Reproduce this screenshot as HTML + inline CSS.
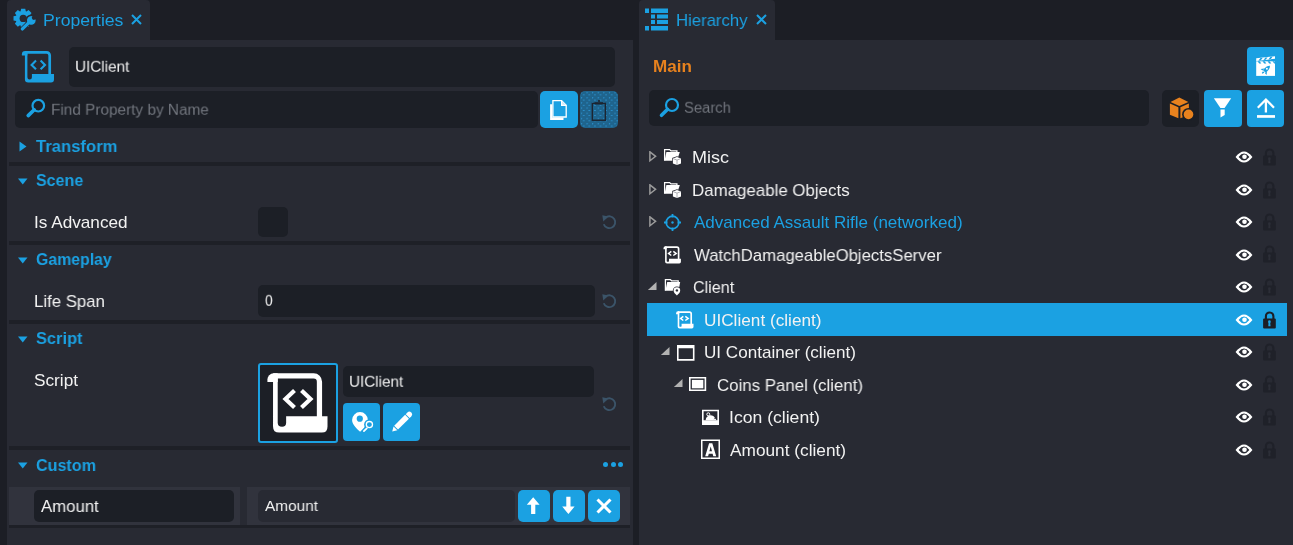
<!DOCTYPE html>
<html><head><meta charset="utf-8"><style>
html,body{margin:0;padding:0;}
body{width:1293px;height:545px;background:#1c1e25;position:relative;overflow:hidden;font-family:"Liberation Sans",sans-serif;}
body>div,body>svg{position:absolute;}
.t{white-space:nowrap;will-change:transform;}
</style></head><body>
<div style="left:7px;top:0px;width:143px;height:41px;background:#282a33;border-radius:4px 4px 0 0;"></div>
<div style="left:7px;top:40px;width:626px;height:505px;background:#282a33;"></div>
<div style="left:639px;top:0px;width:136px;height:41px;background:#282a33;border-radius:4px 4px 0 0;"></div>
<div style="left:639px;top:40px;width:654px;height:505px;background:#282a33;"></div>
<svg style="left:10px;top:5px" width="30" height="30" viewBox="0 0 30 30">
<path d="M10.60 6.26 L11.14 3.72 L15.26 3.72 L15.80 6.26 L16.41 6.51 L18.59 5.10 L21.50 8.01 L20.09 10.19 L20.34 10.80 L22.88 11.34 L22.88 15.46 L20.34 16.00 L20.09 16.61 L21.50 18.79 L18.59 21.70 L16.41 20.29 L15.80 20.54 L15.26 23.08 L11.14 23.08 L10.60 20.54 L9.99 20.29 L7.81 21.70 L4.90 18.79 L6.31 16.61 L6.06 16.00 L3.52 15.46 L3.52 11.34 L6.06 10.80 L6.31 10.19 L4.90 8.01 L7.81 5.10 L9.99 6.51Z" fill="#1ba1e2"/>
<circle cx="13.2" cy="13.4" r="3.6" fill="#282a33"/>
<g stroke="#282a33" stroke-width="2.2" fill="none">
<path d="M12.4 23.9L19.9 16.6" stroke-width="4.8" stroke-linecap="round"/>
<circle cx="21.3" cy="15.5" r="5.0"/>
</g>
<path d="M12.4 23.9L19.9 16.6" stroke="#1ba1e2" stroke-width="3.4" stroke-linecap="round"/>
<circle cx="21.3" cy="15.5" r="4.3" fill="#1ba1e2"/>
<circle cx="23.9" cy="12.8" r="2.1" fill="#282a33"/>
<path d="M23.9 12.8L27.3 9.3" stroke="#282a33" stroke-width="3.4"/>
</svg>
<div class="t" style="left:42.96px;top:11.000px;font-size:17px;line-height:20px;color:#1ba1e2;font-weight:400;transform:scale(1.0382,1.0000);transform-origin:0 0">Properties</div>
<svg style="left:131px;top:14px" width="11" height="11" viewBox="0 0 11 11"><path d="M1 1L10 10M10 1L1 10" stroke="#1ba1e2" stroke-width="2"/></svg>
<svg style="left:15px;top:45px" width="45" height="45" viewBox="0 0 45 45">
<path d="M10 7.3H31.6A3.1 3.1 0 0 1 34.7 10.4V29.5" fill="none" stroke="#1ba1e2" stroke-width="2.7"/>
<path d="M12.4 5.95H10.2A3.3 3.3 0 0 0 6.9 9.25V10.6H12.4Z" fill="#1ba1e2"/>
<path d="M9.9 8V34.3Q9.9 37.6 13.2 37.6H36Q39 37.6 39 34.3V28.9H16.9V32.3Q16.9 34.5 14.7 34.5Q12.4 34.5 12.4 32.3V8Z" fill="#1ba1e2"/>
<path d="M21 15.6L16.6 19.9L21 24.2M25.6 15.6L30 19.9L25.6 24.2" fill="none" stroke="#1ba1e2" stroke-width="2.1"/>
</svg>
<div style="left:69px;top:47px;width:546px;height:40px;background:#1c1f26;border-radius:5px;"></div>
<div class="t" style="left:75.15px;top:58.250px;font-size:16px;line-height:19px;color:#f2f2f2;font-weight:400;transform:scale(0.9536,0.9167);transform-origin:0 0">UIClient</div>
<div style="left:15px;top:91px;width:523px;height:37px;background:#1c1f26;border-radius:5px;"></div>
<svg style="left:25px;top:97px" width="22" height="22" viewBox="0 0 22 22"><circle cx="13.3" cy="8.7" r="5.8" fill="none" stroke="#1ba1e2" stroke-width="2.2"/><path d="M9.2 12.8L3.2 18.6" stroke="#1ba1e2" stroke-width="3.6" stroke-linecap="round"/></svg>
<div class="t" style="left:50.54px;top:101.250px;font-size:16px;line-height:19px;color:#72767e;font-weight:400;transform:scale(0.9595,0.9167);transform-origin:0 0">Find Property by Name</div>
<div style="left:540px;top:91px;width:38px;height:37px;background:#1ba1e2;border-radius:5px;"></div>
<svg style="left:540px;top:91px" width="38" height="37" viewBox="0 0 38 37">
<path d="M10.1 13.2H12.3V26.6H23.5V28.9H10.1Z" fill="#fff"/>
<path d="M12.9 9.7H21.6L26.2 14.3V26H12.9Z" fill="#1ba1e2" stroke="#fff" stroke-width="1.3"/>
<path d="M21.6 9.7V14.3H26.2" fill="#cfe9f8" stroke="#fff" stroke-width="1.2"/>
</svg>
<div style="left:580px;top:91px;width:38px;height:37px;border-radius:5px;background-color:#1f648d;background-image:radial-gradient(circle at 1.5px 1.5px,#2a8ecb 0.5px,transparent 0.95px),radial-gradient(circle at 3.7px 3.9px,#2a8ecb 0.5px,transparent 0.95px);background-size:5.6px 5.2px,5.6px 5.2px"></div>
<svg style="left:580px;top:91px" width="38" height="37" viewBox="0 0 38 37">
<rect x="12.35" y="12.35" width="13" height="16.9" fill="none" stroke="#1c2430" stroke-width="1.4"/>
<path d="M14.5 11.2H23.2L22.5 13.5H15.2Z" fill="#1c2430"/>
<circle cx="19" cy="10" r="1.1" fill="#1c2430"/>
</svg>
<svg style="left:19px;top:141px" width="8" height="11" viewBox="0 0 8 11"><path d="M0.5 0.5L7.5 5.5L0.5 10.5z" fill="#1ba1e2"/></svg>
<div class="t" style="left:35.80px;top:137.000px;font-size:17px;line-height:20px;color:#1ba1e2;font-weight:700;transform:scale(0.9793,1.0000);transform-origin:0 0">Transform</div>
<div style="left:9px;top:162px;width:621px;height:4px;background:#1e2027;"></div>
<svg style="left:18px;top:178px" width="10" height="7" viewBox="0 0 10 7"><path d="M0 0.5H9.5L4.75 6.5z" fill="#1ba1e2"/></svg>
<div class="t" style="left:36.20px;top:171.000px;font-size:17px;line-height:20px;color:#1ba1e2;font-weight:700;transform:scale(0.9420,1.0000);transform-origin:0 0">Scene</div>
<div class="t" style="left:33.69px;top:213.000px;font-size:17px;line-height:20px;color:#f2f2f2;font-weight:400;transform:scale(1.0110,1.0000);transform-origin:0 0">Is Advanced</div>
<div style="left:258px;top:207px;width:30px;height:30px;background:#1c1f26;border-radius:5px;"></div>
<svg style="left:601px;top:214px" width="16" height="16" viewBox="0 0 16 16"><path d="M4.5 3.7A5.9 5.9 0 1 1 2.76 10.2" fill="none" stroke="#3b5469" stroke-width="1.9"/><path d="M1.3 1.2L7.4 2.6L2.3 7.4Z" fill="#3b5469"/></svg>
<div style="left:9px;top:241px;width:621px;height:4px;background:#1e2027;"></div>
<svg style="left:18px;top:256.5px" width="10" height="7" viewBox="0 0 10 7"><path d="M0 0.5H9.5L4.75 6.5z" fill="#1ba1e2"/></svg>
<div class="t" style="left:36.40px;top:250.000px;font-size:17px;line-height:20px;color:#1ba1e2;font-weight:700;transform:scale(0.9321,1.0000);transform-origin:0 0">Gameplay</div>
<div class="t" style="left:34.31px;top:292.000px;font-size:17px;line-height:20px;color:#f2f2f2;font-weight:400;transform:scale(0.9857,1.0000);transform-origin:0 0">Life Span</div>
<div style="left:258px;top:285px;width:337px;height:32px;background:#1c1f26;border-radius:5px;"></div>
<div class="t" style="left:265.30px;top:292.250px;font-size:16px;line-height:19px;color:#f2f2f2;font-weight:400;transform:scale(0.8556,0.9167);transform-origin:0 0">0</div>
<svg style="left:601px;top:293px" width="16" height="16" viewBox="0 0 16 16"><path d="M4.5 3.7A5.9 5.9 0 1 1 2.76 10.2" fill="none" stroke="#3b5469" stroke-width="1.9"/><path d="M1.3 1.2L7.4 2.6L2.3 7.4Z" fill="#3b5469"/></svg>
<div style="left:9px;top:320px;width:621px;height:4px;background:#1e2027;"></div>
<svg style="left:18px;top:335.5px" width="10" height="7" viewBox="0 0 10 7"><path d="M0 0.5H9.5L4.75 6.5z" fill="#1ba1e2"/></svg>
<div class="t" style="left:36.20px;top:329.000px;font-size:17px;line-height:20px;color:#1ba1e2;font-weight:700;transform:scale(0.9646,1.0000);transform-origin:0 0">Script</div>
<div class="t" style="left:34.19px;top:371.000px;font-size:17px;line-height:20px;color:#f2f2f2;font-weight:400;transform:scale(1.0140,1.0000);transform-origin:0 0">Script</div>
<div style="left:258px;top:363px;width:80px;height:80px;background:#1c1f26;border-radius:3px;box-sizing:border-box;border:2px solid #1ba1e2;"></div>
<svg style="left:250px;top:355px" width="90" height="90" viewBox="0 0 90 90">
<g transform="translate(4.5 7.2) scale(1.872)">
<path d="M10 7.3H31.6A3.1 3.1 0 0 1 34.7 10.4V29.5" fill="none" stroke="#fff" stroke-width="2.8"/>
<path d="M12.4 5.95H10.2A3.3 3.3 0 0 0 6.9 9.25V10.6H12.4Z" fill="#fff"/>
<path d="M9.9 8V34.3Q9.9 37.6 13.2 37.6H36Q39 37.6 39 34.3V28.9H16.9V32.3Q16.9 34.5 14.7 34.5Q12.4 34.5 12.4 32.3V8Z" fill="#fff"/>
</g>
<path d="M44.5 35.5L35.5 44L44.5 52.5M51.5 35.5L60.5 44L51.5 52.5" fill="none" stroke="#fff" stroke-width="4.2"/>
</svg>
<div style="left:343px;top:366px;width:251px;height:31px;background:#1c1f26;border-radius:5px;"></div>
<div class="t" style="left:349.35px;top:373.250px;font-size:16px;line-height:19px;color:#f2f2f2;font-weight:400;transform:scale(0.9518,0.9167);transform-origin:0 0">UIClient</div>
<div style="left:343px;top:403px;width:37px;height:38px;background:#1ba1e2;border-radius:4px;"></div>
<svg style="left:343px;top:403px" width="37" height="38" viewBox="0 0 37 38">
<path d="M17 9.1A7.9 7.9 0 0 0 9.1 17C9.1 21.5 13.5 25.5 17.1 28.7C20.5 25.5 24.9 21.5 24.9 17A7.9 7.9 0 0 0 17 9.1Z" fill="#fff"/>
<circle cx="16.8" cy="15.7" r="3.1" fill="#1ba1e2"/>
<circle cx="26.4" cy="21.6" r="5.3" fill="#1ba1e2"/>
<path d="M20.3 28.6L24 24.9" stroke="#1ba1e2" stroke-width="3.6"/>
<circle cx="26.4" cy="21.6" r="3.1" fill="none" stroke="#fff" stroke-width="1.3"/>
<path d="M20.9 28.2L23.8 25.3" stroke="#fff" stroke-width="1.7" stroke-linecap="round"/>
</svg>
<div style="left:383px;top:403px;width:37px;height:38px;background:#1ba1e2;border-radius:4px;"></div>
<svg style="left:383px;top:403px" width="37" height="38" viewBox="0 0 37 38">
<g transform="translate(9.2 28.6) rotate(-45)">
<path d="M0 0L4.6 -2.7V2.7Z" fill="#fff"/>
<rect x="5.5" y="-2.7" width="15.5" height="5.4" fill="#fff"/>
<path d="M21.9 -2.7H24.2A2.7 2.7 0 0 1 24.2 2.7H21.9Z" fill="#fff"/>
</g>
</svg>
<svg style="left:601px;top:396px" width="16" height="16" viewBox="0 0 16 16"><path d="M4.5 3.7A5.9 5.9 0 1 1 2.76 10.2" fill="none" stroke="#3b5469" stroke-width="1.9"/><path d="M1.3 1.2L7.4 2.6L2.3 7.4Z" fill="#3b5469"/></svg>
<div style="left:9px;top:446px;width:621px;height:4px;background:#1e2027;"></div>
<svg style="left:18px;top:461.5px" width="10" height="7" viewBox="0 0 10 7"><path d="M0 0.5H9.5L4.75 6.5z" fill="#1ba1e2"/></svg>
<div class="t" style="left:36.40px;top:456.000px;font-size:17px;line-height:20px;color:#1ba1e2;font-weight:700;transform:scale(0.9476,1.0000);transform-origin:0 0">Custom</div>
<div style="left:603.0px;top:462.2px;width:5px;height:5px;border-radius:50%;background:#1ba1e2"></div>
<div style="left:610.5px;top:462.2px;width:5px;height:5px;border-radius:50%;background:#1ba1e2"></div>
<div style="left:618.0px;top:462.2px;width:5px;height:5px;border-radius:50%;background:#1ba1e2"></div>
<div style="left:9px;top:487px;width:231px;height:38px;background:#31333d;"></div>
<div style="left:247px;top:487px;width:383px;height:38px;background:#31333d;"></div>
<div style="left:34px;top:490px;width:200px;height:32px;background:#1c1f26;border-radius:5px;"></div>
<div class="t" style="left:41.20px;top:497.000px;font-size:17px;line-height:20px;color:#f2f2f2;font-weight:400;transform:scale(0.9864,1.0000);transform-origin:0 0">Amount</div>
<div style="left:258px;top:490px;width:257px;height:32px;background:#282a33;border-radius:5px;"></div>
<div class="t" style="left:265.10px;top:496.000px;font-size:15.5px;line-height:19px;color:#f2f2f2;font-weight:400;transform:scale(0.9926,1.0000);transform-origin:0 0">Amount</div>
<div style="left:518px;top:490px;width:32px;height:32px;background:#1ba1e2;border-radius:5px;"></div>
<svg style="left:518px;top:490px" width="32" height="32" viewBox="0 0 32 32"><path d="M15.2 7.3L8.8 14.8H13.1V24H17.3V14.8H21.6Z" fill="#fff"/></svg>
<div style="left:553px;top:490px;width:32px;height:32px;background:#1ba1e2;border-radius:5px;"></div>
<svg style="left:553px;top:490px" width="32" height="32" viewBox="0 0 32 32"><path d="M15.4 24L9.2 16.6H13.3V6.8H17.5V16.6H21.6Z" fill="#fff"/></svg>
<div style="left:588px;top:490px;width:32px;height:32px;background:#1ba1e2;border-radius:5px;"></div>
<svg style="left:588px;top:490px" width="32" height="32" viewBox="0 0 32 32"><path d="M9.5 9.5l13 13M22.5 9.5l-13 13" stroke="#fff" stroke-width="3"/></svg>
<div style="left:9px;top:525px;width:621px;height:3px;background:#1e2027;"></div>
<svg style="left:644px;top:8px" width="25" height="23" viewBox="0 0 25 23">
<g fill="#1ba1e2">
<rect x="1" y="0.5" width="4" height="4.5"/><rect x="7" y="0.5" width="17" height="4.5"/>
<rect x="7" y="6.5" width="4" height="4"/><rect x="13" y="6.5" width="11" height="4"/>
<rect x="7" y="12" width="4" height="4"/><rect x="13" y="12" width="11" height="4"/>
<rect x="1" y="18" width="4" height="4.5"/><rect x="7" y="18" width="17" height="4.5"/>
</g></svg>
<div class="t" style="left:675.52px;top:11.000px;font-size:17px;line-height:20px;color:#1ba1e2;font-weight:400;transform:scale(0.9833,1.0000);transform-origin:0 0">Hierarchy</div>
<svg style="left:756px;top:14px" width="11" height="11" viewBox="0 0 11 11"><path d="M1 1L10 10M10 1L1 10" stroke="#1ba1e2" stroke-width="2"/></svg>
<div class="t" style="left:652.60px;top:57.000px;font-size:17px;line-height:20px;color:#e8821e;font-weight:700;transform:scale(1.0027,1.0000);transform-origin:0 0">Main</div>
<div style="left:1247px;top:47px;width:37px;height:38px;background:#1ba1e2;border-radius:4px;"></div>
<svg style="left:1250px;top:50px" width="32" height="32" viewBox="0 0 32 32">
<path d="M6.2 8.3L25 6.2V8.8L6.2 10.9Z" fill="#fff"/>
<rect x="6.2" y="11.3" width="18.8" height="14.6" fill="#fff"/>
<g fill="#1ba1e2">
<path d="M8.5 10.6L10.5 7.9H12.6L10.6 10.4Z"/><path d="M13.5 10.1L15.5 7.4H17.6L15.6 9.8Z"/><path d="M18.5 9.5L20.5 6.8H22.6L20.6 9.2Z"/>
<path d="M7.5 11.3H9.6L11.3 13.6H9.2Z"/><path d="M12.5 11.3H14.6L16.3 13.6H14.2Z"/><path d="M17.5 11.3H19.6L21.3 13.6H19.2Z"/><path d="M22.5 11.3H24.6L25 12.2V13.6H24.2Z"/>
</g>
<g transform="translate(16 19.6) rotate(45)" fill="#1ba1e2">
<path d="M0 -5.6C1.8 -4 2.2 -1.5 2 2.5H-2C-2.2 -1.5 -1.8 -4 0 -5.6Z"/>
<path d="M-2 0.5L-4.2 3.4L-1.8 3.2Z"/><path d="M2 0.5L4.2 3.4L1.8 3.2Z"/>
<path d="M-1 3.2H1L0.6 5.4H-0.6Z"/>
</g>
<circle cx="16.9" cy="18.7" r="1" fill="#fff"/>
</svg>
<div style="left:649px;top:90px;width:500px;height:36px;background:#1c1f26;border-radius:5px;"></div>
<svg style="left:657px;top:96px" width="24" height="24" viewBox="0 0 24 24"><circle cx="15" cy="9" r="6" fill="none" stroke="#1ba1e2" stroke-width="2.2"/><path d="M10.6 13.3L4.5 19.3" stroke="#1ba1e2" stroke-width="3.6" stroke-linecap="round"/></svg>
<div class="t" style="left:684.38px;top:99.250px;font-size:16px;line-height:19px;color:#72767e;font-weight:400;transform:scale(0.9245,0.9167);transform-origin:0 0">Search</div>
<div style="left:1162px;top:90px;width:37px;height:37px;background:#1c1f26;border-radius:5px;"></div>
<svg style="left:1162px;top:90px" width="37" height="37" viewBox="0 0 37 37">
<path d="M17.3 7.6L26.3 12L17.3 15.9L8.5 12Z" fill="#e8821e"/>
<path d="M7.9 13.5L16.4 17.2V28.3L7.9 24.8Z" fill="#e8821e"/>
<path d="M18.4 17.2L26.9 13.5V24.8L18.4 28.3Z" fill="#e8821e"/>
<circle cx="26.5" cy="24.4" r="6.4" fill="#1c1f26"/>
<circle cx="26.5" cy="24.4" r="4.8" fill="#e8821e"/>
</svg>
<div style="left:1204px;top:90px;width:38px;height:37px;background:#1ba1e2;border-radius:4px;"></div>
<svg style="left:1204px;top:90px" width="38" height="37" viewBox="0 0 38 37"><path d="M9.85 8.15H27.2L20.6 18H16.4Z" fill="#fff"/><path d="M16.5 19.6H20.7V25.1L16.5 27.5Z" fill="#fff"/></svg>
<div style="left:1247px;top:90px;width:37px;height:37px;background:#1ba1e2;border-radius:4px;"></div>
<svg style="left:1247px;top:90px" width="37" height="37" viewBox="0 0 37 37"><path d="M18.9 8L10 16.9L11.6 18.5L17.75 12.35V22.4H20.05V12.35L26.2 18.5L27.8 16.9Z" fill="#fff"/><rect x="10" y="25.1" width="18" height="2.7" fill="#fff"/></svg>
<div style="left:647px;top:303px;width:640px;height:33px;background:#1ba1e2;"></div>
<svg style="left:648.5px;top:151px" width="9" height="12" viewBox="0 0 9 12"><path d="M0.9 0.8L6.6 5.3L0.9 9.8z" fill="none" stroke="#9a9a9a" stroke-width="1.5"/></svg>
<svg style="left:660px;top:146px" width="24" height="22" viewBox="0 0 24 22"><path d="M4.6 14.8V3.6H9.6L11 4.9H16.9V6.3" fill="none" stroke="#fff" stroke-width="1.25"/>
<path d="M6.4 6.1H19.8L17 14.8H4.6Z" fill="#fff"/>
<path d="M12.9 12.5L17 10.9L21 12.5V17.4L17 19L12.9 17.4Z" fill="#fff" stroke="#282a33" stroke-width="1.4" paint-order="stroke"/>
<path d="M12.9 12.5L17 14.1L21 12.5M17 14.1V19" fill="none" stroke="#9a9ca2" stroke-width="0.8"/></svg>
<div class="t" style="left:692.24px;top:148.000px;font-size:17px;line-height:20px;color:#f2f2f2;font-weight:400;transform:scale(1.0588,1.0000);transform-origin:0 0">Misc</div>
<svg style="left:1234.4px;top:150.4px" width="20" height="14" viewBox="0 0 20 14"><path fill-rule="evenodd" d="M1.55 7Q10 -4 18.45 7Q10 18 1.55 7ZM4.6 7Q10 0.2 15.4 7Q10 13.8 4.6 7Z" fill="#fff"/><circle cx="10.5" cy="6.8" r="2.3" fill="#fff"/></svg>
<svg style="left:1262px;top:148px" width="16" height="19" viewBox="0 0 16 19"><path d="M3.9 8.5V5.25A3.75 3.75 0 0 1 11.4 5.25V8.5" fill="none" stroke="#1f2129" stroke-width="2.1"/><rect x="1.1" y="7.6" width="12.7" height="9.8" rx="1" fill="#1f2129"/><circle cx="7.4" cy="10.7" r="1.35" fill="#2c2e37"/><path d="M6.6 11H8.2L8.5 15.3H6.3Z" fill="#2c2e37"/></svg>
<svg style="left:648.5px;top:183.5px" width="9" height="12" viewBox="0 0 9 12"><path d="M0.9 0.8L6.6 5.3L0.9 9.8z" fill="none" stroke="#9a9a9a" stroke-width="1.5"/></svg>
<svg style="left:660px;top:178.5px" width="24" height="22" viewBox="0 0 24 22"><path d="M4.6 14.8V3.6H9.6L11 4.9H16.9V6.3" fill="none" stroke="#fff" stroke-width="1.25"/>
<path d="M6.4 6.1H19.8L17 14.8H4.6Z" fill="#fff"/>
<path d="M12.9 12.5L17 10.9L21 12.5V17.4L17 19L12.9 17.4Z" fill="#fff" stroke="#282a33" stroke-width="1.4" paint-order="stroke"/>
<path d="M12.9 12.5L17 14.1L21 12.5M17 14.1V19" fill="none" stroke="#9a9ca2" stroke-width="0.8"/></svg>
<div class="t" style="left:692.31px;top:181.000px;font-size:17px;line-height:20px;color:#f2f2f2;font-weight:400;transform:scale(0.9930,1.0000);transform-origin:0 0">Damageable Objects</div>
<svg style="left:1234.4px;top:182.9px" width="20" height="14" viewBox="0 0 20 14"><path fill-rule="evenodd" d="M1.55 7Q10 -4 18.45 7Q10 18 1.55 7ZM4.6 7Q10 0.2 15.4 7Q10 13.8 4.6 7Z" fill="#fff"/><circle cx="10.5" cy="6.8" r="2.3" fill="#fff"/></svg>
<svg style="left:1262px;top:181px" width="16" height="19" viewBox="0 0 16 19"><path d="M3.9 8.5V5.25A3.75 3.75 0 0 1 11.4 5.25V8.5" fill="none" stroke="#1f2129" stroke-width="2.1"/><rect x="1.1" y="7.6" width="12.7" height="9.8" rx="1" fill="#1f2129"/><circle cx="7.4" cy="10.7" r="1.35" fill="#2c2e37"/><path d="M6.6 11H8.2L8.5 15.3H6.3Z" fill="#2c2e37"/></svg>
<svg style="left:648.5px;top:216px" width="9" height="12" viewBox="0 0 9 12"><path d="M0.9 0.8L6.6 5.3L0.9 9.8z" fill="none" stroke="#9a9a9a" stroke-width="1.5"/></svg>
<svg style="left:663px;top:212.5px" width="19" height="19" viewBox="0 0 19 19"><circle cx="9.5" cy="9.5" r="6.3" fill="none" stroke="#1ba1e2" stroke-width="1.7"/><path d="M9.5 1v3.5M9.5 14.5v3.5M1 9.5h3.5M14.5 9.5h3.5" stroke="#1ba1e2" stroke-width="1.8"/><circle cx="9.5" cy="9.5" r="1.2" fill="#1ba1e2"/></svg>
<div class="t" style="left:693.50px;top:213.000px;font-size:17px;line-height:20px;color:#1ba1e2;font-weight:400;transform:scale(1.0007,1.0000);transform-origin:0 0">Advanced Assault Rifle (networked)</div>
<svg style="left:1234.4px;top:215.4px" width="20" height="14" viewBox="0 0 20 14"><path fill-rule="evenodd" d="M1.55 7Q10 -4 18.45 7Q10 18 1.55 7ZM4.6 7Q10 0.2 15.4 7Q10 13.8 4.6 7Z" fill="#fff"/><circle cx="10.5" cy="6.8" r="2.3" fill="#fff"/></svg>
<svg style="left:1262px;top:213px" width="16" height="19" viewBox="0 0 16 19"><path d="M3.9 8.5V5.25A3.75 3.75 0 0 1 11.4 5.25V8.5" fill="none" stroke="#1f2129" stroke-width="2.1"/><rect x="1.1" y="7.6" width="12.7" height="9.8" rx="1" fill="#1f2129"/><circle cx="7.4" cy="10.7" r="1.35" fill="#2c2e37"/><path d="M6.6 11H8.2L8.5 15.3H6.3Z" fill="#2c2e37"/></svg>
<svg style="left:660px;top:243px" width="24" height="24" viewBox="0 0 24 24"><g transform="translate(-0.10 0.25) scale(0.539)">
<path d="M10 7.3H31.6A3.1 3.1 0 0 1 34.7 10.4V29.5" fill="none" stroke="#fff" stroke-width="3.1"/>
<path d="M12.4 5.7H10.2A3.5 3.5 0 0 0 6.7 9.2V11H12.4Z" fill="#fff"/>
<path d="M9.6 8V34.3Q9.6 37.6 13.2 37.6H36Q39 37.6 39 34.3V28.9H16.9V32.3Q16.9 34.5 14.7 34.5Q12.6 34.5 12.6 32.3V8Z" fill="#fff"/>
</g>
<path d="M11.3 8.4L8.6 10.45L11.3 12.5M13.3 8.4L16.2 10.45L13.3 12.5" fill="none" stroke="#fff" stroke-width="1.5"/></svg>
<div class="t" style="left:693.50px;top:246.000px;font-size:17px;line-height:20px;color:#f2f2f2;font-weight:400;transform:scale(0.9837,1.0000);transform-origin:0 0">WatchDamageableObjectsServer</div>
<svg style="left:1234.4px;top:247.9px" width="20" height="14" viewBox="0 0 20 14"><path fill-rule="evenodd" d="M1.55 7Q10 -4 18.45 7Q10 18 1.55 7ZM4.6 7Q10 0.2 15.4 7Q10 13.8 4.6 7Z" fill="#fff"/><circle cx="10.5" cy="6.8" r="2.3" fill="#fff"/></svg>
<svg style="left:1262px;top:245px" width="16" height="19" viewBox="0 0 16 19"><path d="M3.9 8.5V5.25A3.75 3.75 0 0 1 11.4 5.25V8.5" fill="none" stroke="#1f2129" stroke-width="2.1"/><rect x="1.1" y="7.6" width="12.7" height="9.8" rx="1" fill="#1f2129"/><circle cx="7.4" cy="10.7" r="1.35" fill="#2c2e37"/><path d="M6.6 11H8.2L8.5 15.3H6.3Z" fill="#2c2e37"/></svg>
<svg style="left:647.3px;top:280.5px" width="11" height="11" viewBox="0 0 11 11"><path d="M9.5 0.9V9.1H0.9z" fill="#b2b2b2"/></svg>
<svg style="left:660px;top:275px" width="24" height="24" viewBox="0 0 24 24"><path d="M5.4 15.8V4.5H10.3L11.6 5.8H18.2V7" fill="none" stroke="#fff" stroke-width="1.25"/>
<path d="M7.2 7H20.2L18.5 15.8H5.4Z" fill="#fff"/>
<path d="M16.9 12.3A3.3 3.3 0 0 1 20.2 15.6C20.2 17.6 18.5 19.2 16.9 20.5C15.3 19.2 13.6 17.6 13.6 15.6A3.3 3.3 0 0 1 16.9 12.3Z" fill="#fff" stroke="#282a33" stroke-width="1.6" paint-order="stroke"/>
<circle cx="16.9" cy="15.4" r="1.2" fill="#282a33"/></svg>
<div class="t" style="left:692.55px;top:278.000px;font-size:17px;line-height:20px;color:#f2f2f2;font-weight:400;transform:scale(0.9488,1.0000);transform-origin:0 0">Client</div>
<svg style="left:1234.4px;top:280.4px" width="20" height="14" viewBox="0 0 20 14"><path fill-rule="evenodd" d="M1.55 7Q10 -4 18.45 7Q10 18 1.55 7ZM4.6 7Q10 0.2 15.4 7Q10 13.8 4.6 7Z" fill="#fff"/><circle cx="10.5" cy="6.8" r="2.3" fill="#fff"/></svg>
<svg style="left:1262px;top:278px" width="16" height="19" viewBox="0 0 16 19"><path d="M3.9 8.5V5.25A3.75 3.75 0 0 1 11.4 5.25V8.5" fill="none" stroke="#1f2129" stroke-width="2.1"/><rect x="1.1" y="7.6" width="12.7" height="9.8" rx="1" fill="#1f2129"/><circle cx="7.4" cy="10.7" r="1.35" fill="#2c2e37"/><path d="M6.6 11H8.2L8.5 15.3H6.3Z" fill="#2c2e37"/></svg>
<svg style="left:672px;top:308px" width="24" height="24" viewBox="0 0 24 24"><g transform="translate(0.50 0.25) scale(0.539)">
<path d="M10 7.3H31.6A3.1 3.1 0 0 1 34.7 10.4V29.5" fill="none" stroke="#fff" stroke-width="3.1"/>
<path d="M12.4 5.7H10.2A3.5 3.5 0 0 0 6.7 9.2V11H12.4Z" fill="#fff"/>
<path d="M9.6 8V34.3Q9.6 37.6 13.2 37.6H36Q39 37.6 39 34.3V28.9H16.9V32.3Q16.9 34.5 14.7 34.5Q12.6 34.5 12.6 32.3V8Z" fill="#fff"/>
</g>
<path d="M11.3 8.4L8.6 10.45L11.3 12.5M13.3 8.4L16.2 10.45L13.3 12.5" fill="none" stroke="#fff" stroke-width="1.5"/></svg>
<div class="t" style="left:704.09px;top:311.000px;font-size:17px;line-height:20px;color:#f2f2f2;font-weight:400;transform:scale(1.0114,1.0000);transform-origin:0 0">UIClient (client)</div>
<svg style="left:1234.4px;top:312.9px" width="20" height="14" viewBox="0 0 20 14"><path fill-rule="evenodd" d="M1.55 7Q10 -4 18.45 7Q10 18 1.55 7ZM4.6 7Q10 0.2 15.4 7Q10 13.8 4.6 7Z" fill="#fff"/><circle cx="10.5" cy="6.8" r="2.3" fill="#fff"/></svg>
<svg style="left:1262px;top:311px" width="16" height="19" viewBox="0 0 16 19"><path d="M3.9 8.5V5.25A3.75 3.75 0 0 1 11.4 5.25V8.5" fill="none" stroke="#1c1e25" stroke-width="2.1"/><rect x="1.1" y="7.6" width="12.7" height="9.8" rx="1" fill="#1c1e25"/><circle cx="7.4" cy="10.7" r="1.35" fill="#1ba1e2"/><path d="M6.6 11H8.2L8.5 15.3H6.3Z" fill="#1ba1e2"/></svg>
<svg style="left:659.7px;top:345.5px" width="11" height="11" viewBox="0 0 11 11"><path d="M9.5 0.9V9.1H0.9z" fill="#b2b2b2"/></svg>
<svg style="left:676.7px;top:344.5px" width="18" height="16" viewBox="0 0 18 16"><path fill-rule="evenodd" d="M0 0H17.5V15.7H0ZM1.6 3.2V14.1H15.9V3.2Z" fill="#fff"/></svg>
<div class="t" style="left:704.00px;top:343.000px;font-size:17px;line-height:20px;color:#f2f2f2;font-weight:400;transform:scale(1.0047,1.0000);transform-origin:0 0">UI Container (client)</div>
<svg style="left:1234.4px;top:345.4px" width="20" height="14" viewBox="0 0 20 14"><path fill-rule="evenodd" d="M1.55 7Q10 -4 18.45 7Q10 18 1.55 7ZM4.6 7Q10 0.2 15.4 7Q10 13.8 4.6 7Z" fill="#fff"/><circle cx="10.5" cy="6.8" r="2.3" fill="#fff"/></svg>
<svg style="left:1262px;top:343px" width="16" height="19" viewBox="0 0 16 19"><path d="M3.9 8.5V5.25A3.75 3.75 0 0 1 11.4 5.25V8.5" fill="none" stroke="#1f2129" stroke-width="2.1"/><rect x="1.1" y="7.6" width="12.7" height="9.8" rx="1" fill="#1f2129"/><circle cx="7.4" cy="10.7" r="1.35" fill="#2c2e37"/><path d="M6.6 11H8.2L8.5 15.3H6.3Z" fill="#2c2e37"/></svg>
<svg style="left:672.7px;top:378.0px" width="11" height="11" viewBox="0 0 11 11"><path d="M9.5 0.9V9.1H0.9z" fill="#b2b2b2"/></svg>
<svg style="left:688.8px;top:376.9px" width="18" height="15" viewBox="0 0 18 15"><path fill-rule="evenodd" d="M0 0H17.2V14.1H0ZM1.6 1.6V12.5H15.6V1.6Z" fill="#fff"/><rect x="2.9" y="2.9" width="11.4" height="8.4" fill="#fff"/></svg>
<div class="t" style="left:717.11px;top:376.000px;font-size:17px;line-height:20px;color:#f2f2f2;font-weight:400;transform:scale(0.9904,1.0000);transform-origin:0 0">Coins Panel (client)</div>
<svg style="left:1234.4px;top:377.9px" width="20" height="14" viewBox="0 0 20 14"><path fill-rule="evenodd" d="M1.55 7Q10 -4 18.45 7Q10 18 1.55 7ZM4.6 7Q10 0.2 15.4 7Q10 13.8 4.6 7Z" fill="#fff"/><circle cx="10.5" cy="6.8" r="2.3" fill="#fff"/></svg>
<svg style="left:1262px;top:375px" width="16" height="19" viewBox="0 0 16 19"><path d="M3.9 8.5V5.25A3.75 3.75 0 0 1 11.4 5.25V8.5" fill="none" stroke="#1f2129" stroke-width="2.1"/><rect x="1.1" y="7.6" width="12.7" height="9.8" rx="1" fill="#1f2129"/><circle cx="7.4" cy="10.7" r="1.35" fill="#2c2e37"/><path d="M6.6 11H8.2L8.5 15.3H6.3Z" fill="#2c2e37"/></svg>
<svg style="left:702px;top:409px" width="17" height="17" viewBox="0 0 17 17"><path fill-rule="evenodd" d="M0 0.7H17V15.9H0ZM1.6 2.3V11.2H15.4V2.3Z" fill="#fff"/>
<path d="M3.6 11.2Q4.3 6.6 8.3 6.3Q11.6 6.2 13.2 9.6L14.6 11.2Z" fill="#fff"/>
<circle cx="6.3" cy="5.3" r="1.5" fill="none" stroke="#fff" stroke-width="1"/>
<path d="M12.2 10.2L13.4 8.8" stroke="#282a33" stroke-width="0.8"/></svg>
<div class="t" style="left:728.97px;top:408.000px;font-size:17px;line-height:20px;color:#f2f2f2;font-weight:400;transform:scale(1.0349,1.0000);transform-origin:0 0">Icon (client)</div>
<svg style="left:1234.4px;top:410.4px" width="20" height="14" viewBox="0 0 20 14"><path fill-rule="evenodd" d="M1.55 7Q10 -4 18.45 7Q10 18 1.55 7ZM4.6 7Q10 0.2 15.4 7Q10 13.8 4.6 7Z" fill="#fff"/><circle cx="10.5" cy="6.8" r="2.3" fill="#fff"/></svg>
<svg style="left:1262px;top:408px" width="16" height="19" viewBox="0 0 16 19"><path d="M3.9 8.5V5.25A3.75 3.75 0 0 1 11.4 5.25V8.5" fill="none" stroke="#1f2129" stroke-width="2.1"/><rect x="1.1" y="7.6" width="12.7" height="9.8" rx="1" fill="#1f2129"/><circle cx="7.4" cy="10.7" r="1.35" fill="#2c2e37"/><path d="M6.6 11H8.2L8.5 15.3H6.3Z" fill="#2c2e37"/></svg>
<svg style="left:701px;top:439px" width="20" height="21" viewBox="0 0 20 21"><rect x="0.75" y="1.25" width="17.5" height="18" fill="none" stroke="#fff" stroke-width="1.5"/>
<path fill-rule="evenodd" d="M4.2 17.3L8.1 4.2H11.3L15.2 17.3H12.3L11.6 14.7H7.8L7.1 17.3ZM8.4 12.2H11L9.7 7.4Z" fill="#fff"/></svg>
<div class="t" style="left:730.00px;top:441.000px;font-size:17px;line-height:20px;color:#f2f2f2;font-weight:400;transform:scale(1.0149,1.0000);transform-origin:0 0">Amount (client)</div>
<svg style="left:1234.4px;top:442.9px" width="20" height="14" viewBox="0 0 20 14"><path fill-rule="evenodd" d="M1.55 7Q10 -4 18.45 7Q10 18 1.55 7ZM4.6 7Q10 0.2 15.4 7Q10 13.8 4.6 7Z" fill="#fff"/><circle cx="10.5" cy="6.8" r="2.3" fill="#fff"/></svg>
<svg style="left:1262px;top:441px" width="16" height="19" viewBox="0 0 16 19"><path d="M3.9 8.5V5.25A3.75 3.75 0 0 1 11.4 5.25V8.5" fill="none" stroke="#1f2129" stroke-width="2.1"/><rect x="1.1" y="7.6" width="12.7" height="9.8" rx="1" fill="#1f2129"/><circle cx="7.4" cy="10.7" r="1.35" fill="#2c2e37"/><path d="M6.6 11H8.2L8.5 15.3H6.3Z" fill="#2c2e37"/></svg>
</body></html>
